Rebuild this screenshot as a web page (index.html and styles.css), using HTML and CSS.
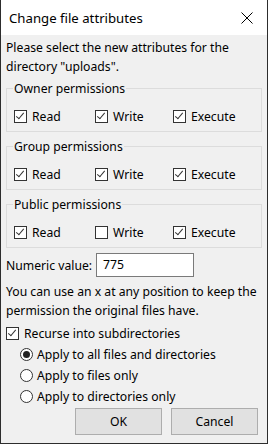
FILE: index.html
```html
<!DOCTYPE html>
<html lang="en">
<head>
    <meta charset="UTF-8">
    <meta name="viewport" content="width=device-width, initial-scale=1.0">
    <title>Change file attributes</title>
    <link rel="stylesheet" href="styles.css">
</head>
<body>
    <div class="dialog">
        <div class="title-bar">
            <span class="title">Change file attributes</span>
            <svg class="close" width="12" height="12" viewBox="0 0 12 12">
                <path d="M0.5 0.5 L11.5 11.5 M11.5 0.5 L0.5 11.5" stroke="#000" stroke-width="1" fill="none"/>
            </svg>
        </div>

        <div class="content">
            <p class="intro">Please select the new attributes for the<br>directory "uploads".</p>

            <fieldset class="perm-group">
                <legend>Owner permissions</legend>
                <div class="perm-row">
                    <label class="check"><span class="box checked"></span>Read</label>
                    <label class="check"><span class="box checked"></span>Write</label>
                    <label class="check"><span class="box checked"></span>Execute</label>
                </div>
            </fieldset>

            <fieldset class="perm-group">
                <legend>Group permissions</legend>
                <div class="perm-row">
                    <label class="check"><span class="box checked"></span>Read</label>
                    <label class="check"><span class="box checked"></span>Write</label>
                    <label class="check"><span class="box checked"></span>Execute</label>
                </div>
            </fieldset>

            <fieldset class="perm-group">
                <legend>Public permissions</legend>
                <div class="perm-row">
                    <label class="check"><span class="box checked"></span>Read</label>
                    <label class="check"><span class="box"></span>Write</label>
                    <label class="check"><span class="box checked"></span>Execute</label>
                </div>
            </fieldset>

            <div class="numeric">
                <span>Numeric value:</span>
                <div class="text-input">775</div>
            </div>

            <p class="hint">You can use an x at any position to keep the<br>permission the original files have.</p>

            <label class="check option"><span class="box checked"></span>Recurse into subdirectories</label>
            <div class="radios">
                <label class="radio option"><span class="dot selected"></span>Apply to all files and directories</label>
                <label class="radio option"><span class="dot"></span>Apply to files only</label>
                <label class="radio option"><span class="dot"></span>Apply to directories only</label>
            </div>

            <div class="buttons">
                <button>OK</button>
                <button>Cancel</button>
            </div>
        </div>
    </div>
</body>
</html>
```

FILE: styles.css
```css
body {
    margin: 0;
    background-color: #f0f0f0;
    font-family: "Noto Sans", "Open Sans", sans-serif;
    font-size: 12.2px;
    color: #000;
}

.dialog {
    width: 268px;
    height: 444px;
    box-sizing: border-box;
    border: 1px solid #2d2d2d;
    border-top: none;
    background-color: #f0f0f0;
}

/* title bar */
.title-bar {
    height: 35px;
    background-color: #fff;
    display: flex;
    align-items: center;
    justify-content: space-between;
    padding: 0 14px 0 8px;
}

.title {
    font-size: 13.2px;
}

.content {
    padding: 0 5px;
}

.intro,
.hint {
    margin: 0;
    line-height: 19px;
}

.intro {
    padding-top: 3px;
}

/* permission groups */
.perm-group {
    margin: 3px 0 5px;
    padding: 9px 7px 5px;
    border: 1px solid #dcdcdc;
}

.perm-group legend {
    padding: 0 1px;
    margin-left: -1px;
    line-height: 19px;
}

.perm-row {
    display: grid;
    grid-template-columns: 81px 78px 1fr;
}

.check,
.radio {
    display: flex;
    align-items: center;
    line-height: 19px;
}

.box {
    width: 11px;
    height: 11px;
    border: 1px solid #333;
    background-color: #fff;
    margin-right: 5px;
    position: relative;
}

.box.checked::after {
    content: "";
    position: absolute;
    left: 3px;
    top: 0px;
    width: 3px;
    height: 7px;
    border: solid #333;
    border-width: 0 1px 1px 0;
    transform: rotate(40deg);
}

/* numeric value */
.numeric {
    display: flex;
    align-items: center;
    margin-top: 0;
}

.numeric span {
    width: 90px;
}

.text-input {
    width: 90px;
    height: 22px;
    line-height: 22px;
    padding-left: 6px;
    border: 1px solid #7a7a7a;
    background-color: #fff;
}

.hint {
    margin-top: 5px;
}

/* recurse options */
.option {
    line-height: 21px;
    margin-top: 3px;
}

.radios {
    padding-left: 14px;
}

.radios .option {
    margin-top: 0;
}

.dot {
    width: 11px;
    height: 11px;
    border: 1px solid #333;
    border-radius: 50%;
    background-color: #fff;
    margin-right: 4px;
    position: relative;
}

.dot.selected::after {
    content: "";
    position: absolute;
    left: 2px;
    top: 2px;
    width: 7px;
    height: 7px;
    border-radius: 50%;
    background-color: #222;
}

/* buttons */
.buttons {
    display: flex;
    justify-content: flex-end;
    gap: 9px;
    margin-top: 1px;
    padding-right: 4px;
}

.buttons button {
    width: 87px;
    height: 27px;
    font-family: inherit;
    font-size: inherit;
    color: #000;
    background-color: #e1e1e1;
    border: 1px solid #adadad;
}
```
